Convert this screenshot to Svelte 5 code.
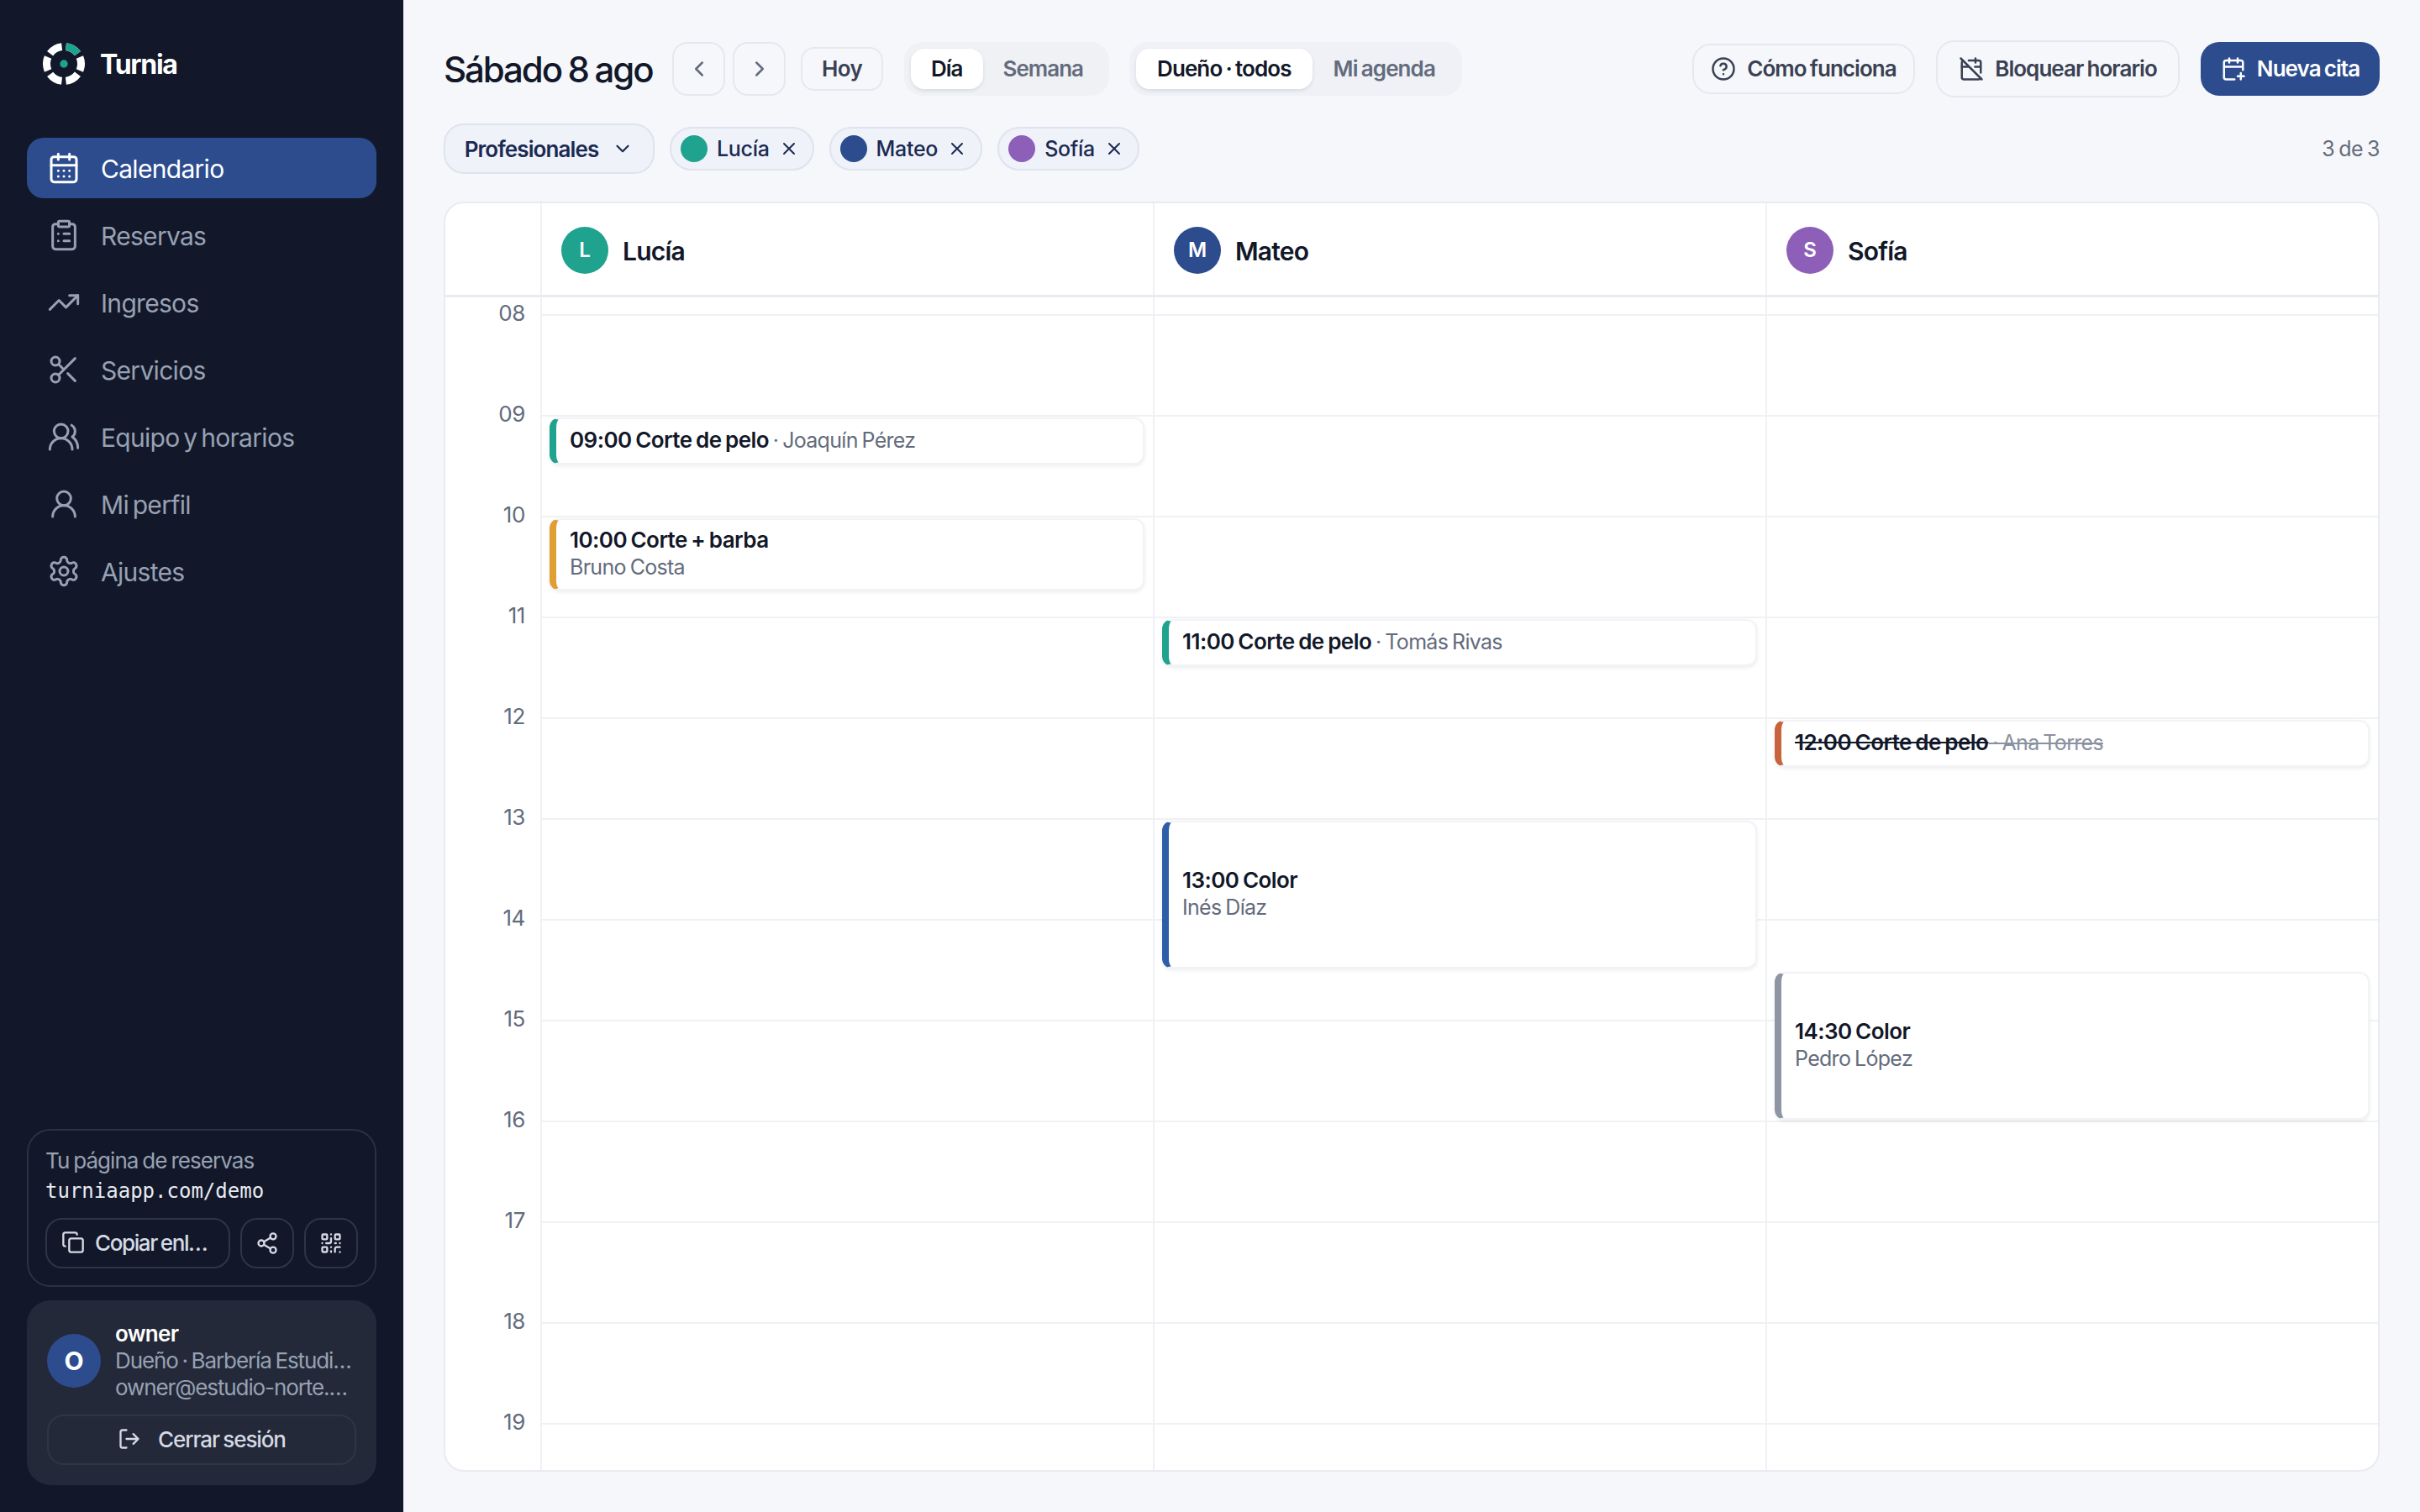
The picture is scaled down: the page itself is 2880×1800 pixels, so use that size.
<script>
  const icons = {
    calendar: '<path d="M8 2v4M16 2v4"/><rect x="3" y="4" width="18" height="18" rx="2"/><path d="M3 10h18M8 14h.01M12 14h.01M16 14h.01M8 18h.01M12 18h.01M16 18h.01"/>',
    clipboard: '<rect x="8" y="2" width="8" height="4" rx="1"/><path d="M16 4h2a2 2 0 0 1 2 2v14a2 2 0 0 1-2 2H6a2 2 0 0 1-2-2V6a2 2 0 0 1 2-2h2"/><path d="M12 11h4M12 16h4M8 11h.01M8 16h.01"/>',
    trending: '<path d="M22 7l-8.5 8.5-5-5L2 17"/><path d="M16 7h6v6"/>',
    scissors: '<circle cx="6" cy="6" r="3"/><path d="M8.12 8.12 12 12M20 4 8.12 15.88"/><circle cx="6" cy="18" r="3"/><path d="M14.8 14.8 20 20"/>',
    users: '<path d="M18 21a8 8 0 0 0-16 0"/><circle cx="10" cy="8" r="5"/><path d="M22 20c0-3.37-2-6.5-4-8a5 5 0 0 0-.45-8.3"/>',
    user: '<circle cx="12" cy="8" r="5"/><path d="M20 21a8 8 0 0 0-16 0"/>',
    settings: '<path d="M12.22 2h-.44a2 2 0 0 0-2 2v.18a2 2 0 0 1-1 1.73l-.43.25a2 2 0 0 1-2 0l-.15-.08a2 2 0 0 0-2.73.73l-.22.38a2 2 0 0 0 .73 2.73l.15.1a2 2 0 0 1 1 1.72v.51a2 2 0 0 1-1 1.74l-.15.09a2 2 0 0 0-.73 2.73l.22.38a2 2 0 0 0 2.73.73l.15-.08a2 2 0 0 1 2 0l.43.25a2 2 0 0 1 1 1.73V20a2 2 0 0 0 2 2h.44a2 2 0 0 0 2-2v-.18a2 2 0 0 1 1-1.73l.43-.25a2 2 0 0 1 2 0l.15.08a2 2 0 0 0 2.73-.73l.22-.39a2 2 0 0 0-.73-2.73l-.15-.08a2 2 0 0 1-1-1.74v-.5a2 2 0 0 1 1-1.74l.15-.09a2 2 0 0 0 .73-2.73l-.22-.38a2 2 0 0 0-2.73-.73l-.15.08a2 2 0 0 1-2 0l-.43-.25a2 2 0 0 1-1-1.73V4a2 2 0 0 0-2-2z"/><circle cx="12" cy="12" r="3"/>',
    copy: '<rect x="8" y="8" width="14" height="14" rx="2"/><path d="M4 16c-1.1 0-2-.9-2-2V4c0-1.1.9-2 2-2h10c1.1 0 2 .9 2 2"/>',
    share: '<circle cx="18" cy="5" r="3"/><circle cx="6" cy="12" r="3"/><circle cx="18" cy="19" r="3"/><path d="M8.59 13.51l6.83 3.98M15.41 6.51l-6.82 3.98"/>',
    qr: '<rect x="3" y="3" width="5" height="5" rx="1"/><rect x="16" y="3" width="5" height="5" rx="1"/><rect x="3" y="16" width="5" height="5" rx="1"/><path d="M21 16h-3a2 2 0 0 0-2 2v3M21 21v.01M12 7v3a2 2 0 0 1-2 2H7M3 12h.01M12 3h.01M12 16v.01M16 12h1M21 12v.01M12 21v-1"/>',
    logout: '<path d="M9 21H5a2 2 0 0 1-2-2V5a2 2 0 0 1 2-2h4"/><path d="M16 17l5-5-5-5M21 12H9"/>',
    help: '<circle cx="12" cy="12" r="10"/><path d="M9.09 9a3 3 0 0 1 5.83 1c0 2-3 3-3 3M12 17h.01"/>',
    block: '<path d="M4.18 4.18A2 2 0 0 0 3 6v14a2 2 0 0 0 2 2h14a2 2 0 0 0 1.82-1.18"/><path d="M21 15.5V6a2 2 0 0 0-2-2H9.5M16 2v4M3 10h7M21 10h-5.5M2 2l20 20"/>',
    plus: '<path d="M8 2v4M16 2v4M21 13V6a2 2 0 0 0-2-2H5a2 2 0 0 0-2 2v14a2 2 0 0 0 2 2h8M3 10h18M16 19h6M19 16v6"/>',
    left: '<path d="M15 18l-6-6 6-6"/>',
    right: '<path d="M9 18l6-6-6-6"/>',
    down: '<path d="M6 9l6 6 6-6"/>',
    x: '<path d="M18 6 6 18M6 6l12 12"/>'
  }

  const nav = [
    { label: 'Calendario', icon: 'calendar', active: true },
    { label: 'Reservas', icon: 'clipboard' },
    { label: 'Ingresos', icon: 'trending' },
    { label: 'Servicios', icon: 'scissors' },
    { label: 'Equipo y horarios', icon: 'users' },
    { label: 'Mi perfil', icon: 'user' },
    { label: 'Ajustes', icon: 'settings' }
  ]

  const hours = ['08', '09', '10', '11', '12', '13', '14', '15', '16', '17', '18', '19']

  const staff = [
    {
      name: 'Lucía', initial: 'L', color: '#1fa38e',
      events: [
        { start: 9, mins: 30, time: '09:00 Corte de pelo', client: 'Joaquín Pérez', color: '#1fa38e', inline: true },
        { start: 10, mins: 45, time: '10:00 Corte + barba', client: 'Bruno Costa', color: '#e09f33' }
      ]
    },
    {
      name: 'Mateo', initial: 'M', color: '#2c4c8e',
      events: [
        { start: 11, mins: 30, time: '11:00 Corte de pelo', client: 'Tomás Rivas', color: '#1fa38e', inline: true },
        { start: 13, mins: 90, time: '13:00 Color', client: 'Inés Díaz', color: '#2f5ea8' }
      ]
    },
    {
      name: 'Sofía', initial: 'S', color: '#8e5fb8',
      events: [
        { start: 12, mins: 30, time: '12:00 Corte de pelo', client: 'Ana Torres', color: '#c8643b', inline: true, cancelled: true },
        { start: 14.5, mins: 90, time: '14:30 Color', client: 'Pedro López', color: '#8f96a3' }
      ]
    }
  ]

  const top = (e) => 21 + (e.start - 8) * 120 + 2
  const height = (e) => e.mins * 2 - 4
</script>

{#snippet icon(name, size, weight = 2)}
  <svg class="icon" width={size} height={size} viewBox="0 0 24 24" fill="none" stroke="currentColor" stroke-width={weight} stroke-linecap="round" stroke-linejoin="round">{@html icons[name]}</svg>
{/snippet}

<div class="app">
  <aside class="sidebar">
    <div class="brand">
      <svg width="50" height="50" viewBox="0 0 50 50" fill="none">
        <circle cx="25" cy="25" r="20.5" stroke="#fff" stroke-width="9" pathLength="360" stroke-dasharray="46 14" transform="rotate(-83 25 25)" />
        <circle cx="25" cy="25" r="20.5" stroke="#1fa38e" stroke-width="9" pathLength="360" stroke-dasharray="46 314" transform="rotate(-83 25 25)" />
        <circle cx="25" cy="25" r="4.7" fill="#1fa38e" />
      </svg>
      <span>Turnia</span>
    </div>

    <nav>
      {#each nav as item}
        <div class="nav-item" class:active={item.active}>
          {@render icon(item.icon, 40, 1.8)}
          <span>{item.label}</span>
        </div>
      {/each}
    </nav>

    <div class="booking">
      <div class="booking-label">Tu página de reservas</div>
      <div class="booking-url">turniaapp.com/demo</div>
      <div class="booking-actions">
        <button class="ghost copy">{@render icon('copy', 28)}<span>Copiar enl…</span></button>
        <button class="ghost square">{@render icon('share', 28)}</button>
        <button class="ghost square">{@render icon('qr', 28)}</button>
      </div>
    </div>

    <div class="account">
      <div class="account-row">
        <div class="account-avatar">O</div>
        <div class="account-text">
          <div class="account-name">owner</div>
          <div class="account-line">Dueño · Barbería Estudi…</div>
          <div class="account-line">owner@estudio-norte.…</div>
        </div>
      </div>
      <button class="ghost logout">{@render icon('logout', 28)}<span>Cerrar sesión</span></button>
    </div>
  </aside>

  <main>
    <header class="toolbar">
      <h1>Sábado 8 ago</h1>
      <button class="arrow">{@render icon('left', 30)}</button>
      <button class="arrow">{@render icon('right', 30)}</button>
      <button class="today">Hoy</button>
      <div class="segment view">
        <span class="seg on">Día</span>
        <span class="seg">Semana</span>
      </div>
      <div class="segment scope">
        <span class="seg on">Dueño · todos</span>
        <span class="seg">Mi agenda</span>
      </div>
      <button class="action help">{@render icon('help', 30)}Cómo funciona</button>
      <button class="action blockout">{@render icon('block', 30)}Bloquear horario</button>
      <button class="action primary">{@render icon('plus', 30)}Nueva cita</button>
    </header>

    <div class="filters">
      <button class="pros">Profesionales {@render icon('down', 26)}</button>
      {#each staff as person}
        <span class="chip">
          <span class="dot" style="background: {person.color}"></span>
          {person.name}
          {@render icon('x', 24)}
        </span>
      {/each}
      <span class="count">3 de 3</span>
    </div>

    <section class="calendar">
      <div class="cal-head">
        <div></div>
        {#each staff as person}
          <div class="head-cell">
            <span class="avatar" style="background: {person.color}">{person.initial}</span>
            <span class="head-name">{person.name}</span>
          </div>
        {/each}
      </div>
      <div class="cal-body">
        <div class="times">
          {#each hours as h}
            <div class="time"><span>{h}</span></div>
          {/each}
        </div>
        {#each staff as person}
          <div class="col">
            {#each hours as h}
              <div class="slot"></div>
            {/each}
            {#each person.events as e}
              <div class="event" class:inline={e.inline} class:cancelled={e.cancelled} style="top: {top(e)}px; height: {height(e)}px; border-left-color: {e.color}">
                <span class="event-title">{e.time}</span>{#if e.inline}<span class="event-client">{' · ' + e.client}</span>{:else}<span class="event-client">{e.client}</span>{/if}
              </div>
            {/each}
          </div>
        {/each}
      </div>
    </section>
  </main>
</div>

<style>
  :global(body) {
    margin: 0;
    background: #f6f7fb;
    font-family: Inter, "Noto Sans", sans-serif;
    color: #121829;
    word-spacing: -1.5px;
  }

  button {
    font-family: inherit;
    word-spacing: inherit;
    background: none;
    cursor: pointer;
  }

  .icon {
    flex: none;
    display: block;
  }

  .app {
    display: flex;
    height: 1800px;
  }

  /* sidebar */
  .sidebar {
    width: 480px;
    flex: none;
    box-sizing: border-box;
    background: #121829;
    padding: 51px 32px 32px;
    display: flex;
    flex-direction: column;
  }

  .brand {
    display: flex;
    align-items: center;
    gap: 18px;
    padding-left: 19px;
    color: #fff;
    font-size: 32px;
    font-weight: 700;
    letter-spacing: -1.3px;
  }

  nav {
    margin-top: 63px;
    display: flex;
    flex-direction: column;
    gap: 8px;
  }

  .nav-item {
    height: 72px;
    border-radius: 20px;
    padding-left: 24px;
    display: flex;
    align-items: center;
    gap: 24px;
    font-size: 30px;
    letter-spacing: -0.7px;
    word-spacing: -3px;
    color: #98a1b3;
  }

  .nav-item span {
    padding-top: 2px;
  }

  .nav-item.active {
    background: #2c4c8e;
    color: #fff;
  }

  .booking {
    margin-top: auto;
    height: 188px;
    box-sizing: border-box;
    border: 2px solid #2b3142;
    border-radius: 28px;
    padding: 18px 20px 0;
  }

  .booking-label {
    font-size: 26px;
    line-height: 36px;
    letter-spacing: -0.95px;
    color: #98a1b3;
  }

  .booking-url {
    font-family: "DejaVu Sans Mono", monospace;
    font-size: 24px;
    line-height: 36px;
    color: #e8ebf2;
  }

  .booking-actions {
    margin-top: 14px;
    display: flex;
    gap: 12px;
  }

  .ghost {
    height: 60px;
    box-sizing: border-box;
    border: 2px solid #2f3546;
    border-radius: 20px;
    color: #d5dae4;
    font-size: 26px;
    font-weight: 500;
    letter-spacing: -1.1px;
    display: flex;
    align-items: center;
    justify-content: center;
    padding: 0 0 2px;
  }

  .copy {
    width: 220px;
    gap: 12px;
    justify-content: flex-start;
    padding-left: 17px;
    letter-spacing: -1.4px;
  }

  .square {
    width: 64px;
    padding-bottom: 0;
  }

  .account {
    margin-top: 16px;
    height: 220px;
    box-sizing: border-box;
    background: #232938;
    border-radius: 28px;
    padding: 24px 24px 0;
  }

  .account-row {
    display: flex;
    align-items: center;
    gap: 17px;
  }

  .account-avatar {
    width: 64px;
    height: 64px;
    border-radius: 50%;
    flex: none;
    background: #2c4c8e;
    color: #fff;
    font-size: 30px;
    font-weight: 700;
    display: flex;
    align-items: center;
    justify-content: center;
  }

  .account-text {
    min-width: 0;
    flex: 1;
  }

  .account-name {
    font-size: 26px;
    line-height: 32px;
    font-weight: 600;
    letter-spacing: -0.7px;
    color: #fff;
  }

  .account-line {
    font-size: 26px;
    line-height: 32px;
    letter-spacing: -1.1px;
    color: #98a1b3;
    white-space: nowrap;
  }

  .logout {
    width: 368px;
    margin-top: 16px;
    gap: 20px;
  }

  /* main */
  main {
    flex: 1;
    min-width: 0;
    box-sizing: border-box;
    padding: 50px 48px 48px;
    display: flex;
    flex-direction: column;
  }

  .toolbar {
    display: flex;
    align-items: center;
    height: 64px;
  }

  h1 {
    margin: 0;
    width: 272px;
    font-size: 42px;
    font-weight: 500;
    letter-spacing: -2.1px;
    white-space: nowrap;
    color: #121829;
  }

  .arrow {
    width: 63px;
    height: 64px;
    box-sizing: border-box;
    border: 2px solid #e6e8ef;
    border-radius: 18px;
    margin-right: 9px;
    color: #636b7c;
    display: flex;
    align-items: center;
    justify-content: center;
    padding: 0;
  }

  .today {
    width: 98px;
    height: 52px;
    margin-left: 9px;
    box-sizing: border-box;
    border: 2px solid #e6e8ef;
    border-radius: 16px;
    font-size: 26px;
    font-weight: 600;
    letter-spacing: -0.6px;
    color: #3a4152;
    padding: 0 0 2px;
  }

  .segment {
    height: 64px;
    box-sizing: border-box;
    border-radius: 22px;
    padding: 8px;
    display: flex;
    background: #eff1f7;
  }

  .view {
    width: 244px;
    margin-left: 25px;
    background: #f0f1f5;
  }

  .scope {
    width: 396px;
    margin-left: 24px;
  }

  .seg {
    height: 48px;
    box-sizing: border-box;
    display: flex;
    align-items: center;
    justify-content: center;
    padding: 0 24px 2px;
    border-radius: 16px;
    font-size: 26px;
    font-weight: 600;
    letter-spacing: -1px;
    color: #636b7c;
    white-space: nowrap;
  }

  .scope .seg {
    padding: 0 25px 2px;
    letter-spacing: -0.9px;
  }

  .seg.on {
    background: #fff;
    color: #121829;
    box-shadow: 0 2px 4px rgba(18, 24, 41, 0.1);
  }

  .action {
    box-sizing: border-box;
    border: 2px solid #e6e8ef;
    display: flex;
    align-items: center;
    justify-content: center;
    gap: 13px;
    padding: 0 0 1px;
    font-size: 26px;
    font-weight: 600;
    color: #3a4152;
    letter-spacing: -0.95px;
    white-space: nowrap;
  }

  .help {
    margin-left: auto;
    width: 265px;
    height: 60px;
    border-radius: 22px;
  }

  .blockout {
    margin-left: 25px;
    width: 290px;
    height: 68px;
    border-radius: 22px;
  }

  .primary {
    margin-left: 25px;
    width: 213px;
    height: 64px;
    border-radius: 22px;
    border: none;
    background: #2c4c8e;
    color: #fff;
  }

  .filters {
    margin-top: 33px;
    height: 60px;
    display: flex;
    align-items: center;
    gap: 18px;
  }

  .pros {
    width: 251px;
    height: 60px;
    box-sizing: border-box;
    border: 2px solid #dfe3ee;
    border-radius: 24px;
    background: #eff2f9;
    color: #1b2a52;
    font-size: 26px;
    font-weight: 600;
    letter-spacing: -0.9px;
    display: flex;
    align-items: center;
    justify-content: center;
    gap: 16px;
    padding: 0;
  }

  .chip {
    height: 52px;
    box-sizing: border-box;
    border: 2px solid #dfe3ee;
    border-radius: 26px;
    background: #eff2f9;
    color: #1b2a52;
    font-size: 25px;
    font-weight: 500;
    letter-spacing: -0.3px;
    display: flex;
    align-items: center;
    gap: 11px;
    padding: 0 16px 0 11px;
  }

  .dot {
    width: 32px;
    height: 32px;
    border-radius: 50%;
  }

  .count {
    margin-left: auto;
    font-size: 25px;
    letter-spacing: -0.5px;
    color: #636b7c;
  }

  /* calendar */
  .calendar {
    margin-top: 33px;
    flex: 1;
    min-height: 0;
    box-sizing: border-box;
    border: 2px solid #e9ebf1;
    border-radius: 24px;
    background: #fff;
    overflow: hidden;
    display: flex;
    flex-direction: column;
  }

  .cal-head,
  .cal-body {
    display: grid;
    grid-template-columns: 113px 1fr 1fr 1fr;
  }

  .cal-head {
    height: 109px;
    flex: none;
    border-bottom: 3px solid #e9ebf1;
  }

  .head-cell {
    border-left: 2px solid #eff1f5;
    display: flex;
    align-items: center;
    gap: 17px;
    padding: 2px 0 0 23px;
  }

  .avatar {
    width: 56px;
    height: 56px;
    border-radius: 50%;
    color: #fff;
    font-size: 24px;
    font-weight: 600;
    display: flex;
    align-items: center;
    justify-content: center;
  }

  .head-name {
    font-size: 30px;
    font-weight: 600;
    letter-spacing: -0.8px;
    padding-top: 2px;
  }

  .cal-body {
    flex: 1;
    min-height: 0;
  }

  .times {
    padding-top: 20px;
  }

  .time {
    height: 120px;
    padding-right: 18px;
    text-align: right;
    font-size: 26px;
    line-height: 24px;
    letter-spacing: -0.4px;
    color: #636b7c;
  }

  .time span {
    display: block;
    transform: translateY(-13px);
  }

  .col {
    position: relative;
    border-left: 2px solid #eff1f5;
    padding-top: 20px;
  }

  .slot {
    height: 120px;
    box-sizing: border-box;
    border-top: 2px solid #eff1f5;
  }

  .event {
    position: absolute;
    left: 9px;
    right: 10px;
    box-sizing: border-box;
    background: #fff;
    border: 2px solid #f2f3f6;
    border-left: 8px solid;
    border-radius: 12px;
    padding: 0 16px 2px;
    box-shadow: 0 2px 4px rgba(18, 24, 41, 0.08);
    display: flex;
    flex-direction: column;
    justify-content: center;
    line-height: 32px;
  }

  .event.inline {
    display: block;
    line-height: 50px;
    white-space: pre;
  }

  .event-title {
    font-size: 26px;
    font-weight: 600;
    letter-spacing: -0.55px;
    color: #121829;
  }

  .event-client {
    font-size: 25px;
    letter-spacing: -0.7px;
    color: #636b7c;
  }

  .cancelled span {
    text-decoration: line-through;
  }

  .cancelled .event-client {
    color: #8a91a0;
  }
</style>
